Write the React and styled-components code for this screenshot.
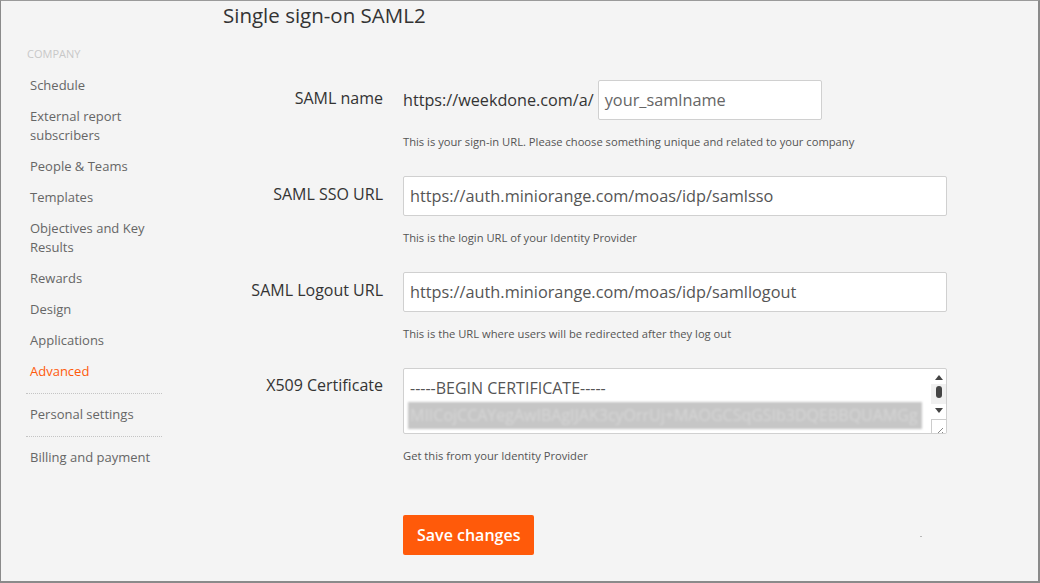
import styled, { createGlobalStyle } from "styled-components";

const Global = createGlobalStyle`
  html, body { margin: 0; padding: 0; }
  body { background: #f4f4f4; font-family: "Open Sans", "Liberation Sans", sans-serif; }
  * { box-sizing: border-box; }
`;

const Frame = styled.div`
  width: 1040px;
  height: 583px;
  display: flex;
  background: #f4f4f4;
  border-top: 1px solid #9a9a9a;
  border-left: 1px solid #8a8a8a;
  border-right: 2px solid #8a8a8a;
  border-bottom: 2px solid #8a8a8a;
  overflow: hidden;
`;

const Sidebar = styled.nav`
  width: 222px;
  flex-shrink: 0;
  padding: 45px 0 0 25px;
`;

const SideHeading = styled.div`
  font-size: 11px;
  line-height: 16px;
  color: #c8c8c8;
  padding-left: 1px;
  margin-bottom: 8px;
  text-transform: uppercase;
`;

const SideList = styled.div`
  width: 136px;
`;

const SideItem = styled.div`
  font-size: 13px;
  line-height: 19px;
  padding: 6px 0 6px 4px;
  color: ${(p) => (p.$active ? "#ff5a0a" : "#666")};
`;

const Divider = styled.div`
  border-top: 1px dotted #c4c4c4;
  margin: 6px 0 5px;
`;

const Main = styled.main`
  flex: 1;
  padding-top: 1px;
`;

const Title = styled.h1`
  margin: 0;
  font-size: 20.5px;
  line-height: 26px;
  font-weight: 500;
  color: #333;
`;

const Form = styled.div`
  margin-top: 52px;
  display: grid;
  grid-template-columns: 160px 544px;
  column-gap: 20px;
  align-items: start;
`;

const Label = styled.div`
  text-align: right;
  font-size: 16px;
  line-height: 22px;
  color: #333;
  padding-top: ${(p) => p.$top || 7}px;
`;

const Field = styled.div`
  margin-bottom: 26px;
`;

const Inline = styled.div`
  display: flex;
  align-items: center;
  font-size: 16.2px;
  color: #333;
`;

const Input = styled.div`
  height: 40px;
  width: ${(p) => p.$w || 544}px;
  margin-left: ${(p) => p.$ml || 0}px;
  background: #fff;
  border: 1px solid #d0d0d0;
  border-radius: 2px;
  padding: 0 6px;
  display: flex;
  align-items: center;
  font-size: 16.3px;
  color: ${(p) => (p.$muted ? "#666" : "#555")};
  white-space: nowrap;
  overflow: hidden;
`;

const Help = styled.div`
  margin-top: 14px;
  font-size: 11.2px;
  line-height: 16px;
  color: #555;
`;

const TextBox = styled.div`
  position: relative;
  height: 66px;
  background: #fff;
  border: 1px solid #d0d0d0;
  border-radius: 2px;
  padding: 6px 0 0 4px;
  overflow: hidden;
`;

const CertLine = styled.div`
  font-size: 16px;
  line-height: 27px;
  height: 27px;
  width: 514px;
  padding-left: 2px;
  color: #555;
  white-space: nowrap;
  overflow: hidden;
`;

const Selected = styled(CertLine)`
  background: #c6c6c6;
  color: #d6d6d6;
  filter: blur(0.8px);
`;

const Scroll = styled.div`
  position: absolute;
  top: 0;
  right: 0;
  width: 15px;
  height: 64px;
  display: flex;
  flex-direction: column;
  align-items: center;
`;

const Arrow = styled.div`
  width: 0;
  height: 0;
  border-left: 4px solid transparent;
  border-right: 4px solid transparent;
  ${(p) => (p.$down ? "border-top: 5px solid #444;" : "border-bottom: 5px solid #444;")}
  margin-top: ${(p) => p.$mt}px;
`;

const Track = styled.div`
  margin-top: 4px;
  width: 15px;
  height: 20px;
  background: #f0f0f0;
  display: flex;
  justify-content: center;
  padding-top: 2px;
`;

const Thumb = styled.div`
  width: 6px;
  height: 12px;
  border-radius: 3px;
  background: #444;
`;

const Grip = styled.div`
  position: absolute;
  right: 0;
  bottom: 0;
  width: 15px;
  height: 14px;
  border-left: 1px solid #ccc;
  border-top: 1px solid #ccc;
  background: #fff;
`;

const Actions = styled.div`
  grid-column: 2;
  margin-top: 25px;
  display: flex;
  align-items: center;
`;

const Button = styled.button`
  height: 40px;
  padding: 0 14px;
  border: none;
  border-radius: 2px;
  background: #ff5a0a;
  color: #fff;
  font-family: "Open Sans", "Liberation Sans", sans-serif;
  font-size: 16px;
  font-weight: 600;
`;

const Dash = styled.span`
  margin-left: 386px;
  margin-top: 2px;
  width: 2px;
  height: 1px;
  background: #b8b8b8;
`;

const nav = [
  "Schedule",
  "External report subscribers",
  "People & Teams",
  "Templates",
  "Objectives and Key Results",
  "Rewards",
  "Design",
  "Applications",
];

export default function App() {
  return (
    <>
      <Global />
      <Frame>
        <Sidebar>
          <SideHeading>Company</SideHeading>
          <SideList>
            {nav.map((n) => (
              <SideItem key={n}>{n}</SideItem>
            ))}
            <SideItem $active>Advanced</SideItem>
            <Divider />
            <SideItem>Personal settings</SideItem>
            <Divider />
            <SideItem>Billing and payment</SideItem>
          </SideList>
        </Sidebar>
        <Main>
          <Title>Single sign-on SAML2</Title>
          <Form>
            <Label>SAML name</Label>
            <Field>
              <Inline>
                https://weekdone.com/a/
                <Input $w={224} $ml={4} $muted>your_samlname</Input>
              </Inline>
              <Help>This is your sign-in URL. Please choose something unique and related to your company</Help>
            </Field>

            <Label>SAML SSO URL</Label>
            <Field>
              <Input>https://auth.miniorange.com/moas/idp/samlsso</Input>
              <Help>This is the login URL of your Identity Provider</Help>
            </Field>

            <Label>SAML Logout URL</Label>
            <Field>
              <Input>https://auth.miniorange.com/moas/idp/samllogout</Input>
              <Help>This is the URL where users will be redirected after they log out</Help>
            </Field>

            <Label $top={6}>X509 Certificate</Label>
            <Field>
              <TextBox>
                <CertLine>-----BEGIN CERTIFICATE-----</CertLine>
                <Selected>MIICojCCAYegAwIBAgIJAK3cyOrrUj+MAOGCSqGSIb3DQEBBQUAMGg</Selected>
                <Scroll>
                  <Arrow $mt={6} />
                  <Track>
                    <Thumb />
                  </Track>
                  <Arrow $down $mt={4} />
                </Scroll>
                <Grip>
                  <svg width="14" height="13" viewBox="0 0 14 13">
                    <path d="M11 4 L4 11 M11 8 L8 11" stroke="#888" strokeWidth="1" />
                  </svg>
                </Grip>
              </TextBox>
              <Help>Get this from your Identity Provider</Help>
            </Field>

            <Actions>
              <Button>Save changes</Button>
              <Dash />
            </Actions>
          </Form>
        </Main>
      </Frame>
    </>
  );
}
